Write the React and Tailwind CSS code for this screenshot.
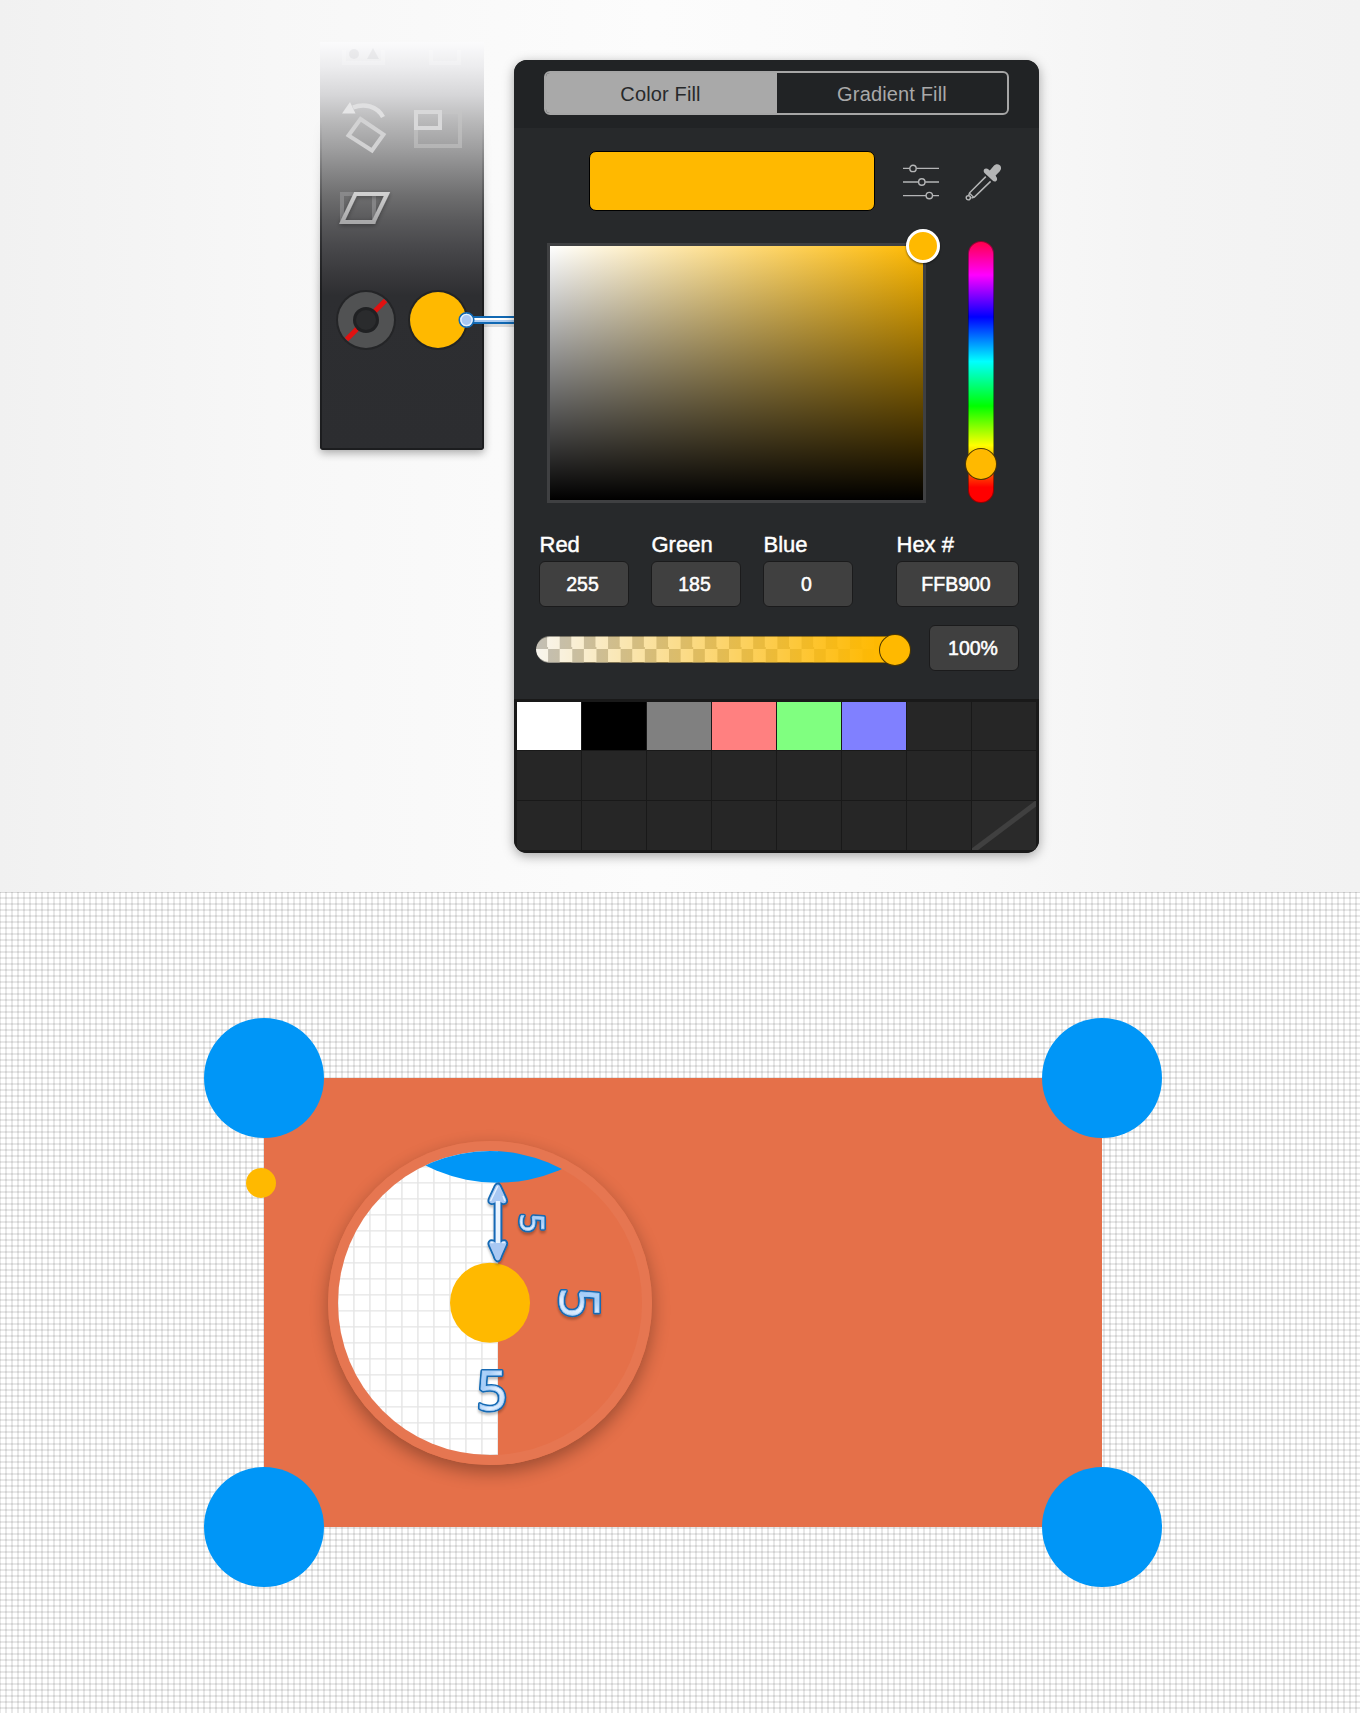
import React from "react";

const SWATCHES = ["#ffffff", "#000000", "#808080", "#ff8080", "#80ff80", "#8080ff"];

function Field({ label, value, className }) {
  return (
    <div className={className}>
      <div className="mb-[4px] ml-[1px] mt-[1px] h-6 text-[22px] leading-6 text-white [-webkit-text-stroke:0.45px_white]">{label}</div>
      <ValueBox value={value} />
    </div>
  );
}

function ValueBox({ value }) {
  return (
    <div className="flex h-[46px] items-center justify-center rounded-[6px] border border-[#1b1b1c] bg-[#404040] pr-[2px] pt-[1px] text-[19.5px] leading-none text-white [-webkit-text-stroke:0.5px_white]">
      {value}
    </div>
  );
}

function SlidersIcon() {
  return (
    <svg width="38" height="36" viewBox="0 0 38 36" fill="none" stroke="#b4b5b6" strokeWidth="1.4">
      <path d="M1 4.4H7.7M14.3 4.4H37M1 18H16.5M23.1 18H37M1 31.6H24M30.6 31.6H37" />
      <circle cx="11" cy="4.4" r="3.2" />
      <circle cx="19.8" cy="18" r="3.2" />
      <circle cx="27.3" cy="31.6" r="3.2" />
    </svg>
  );
}

function DropperIcon() {
  return (
    <svg width="37" height="38" viewBox="0 0 37 38" fill="none">
      <path d="M20.8 12.6L4.6 28.8L3.600 31.8M25.600 17.400L9.400 33L6.400 34" stroke="#b4b5b6" strokeWidth="1.500" />
      <circle cx="3.300" cy="33.800" r="2.100" stroke="#b4b5b6" strokeWidth="1.400" />
      <path d="M4.800 29.500L8.800 33.500" stroke="#b4b5b6" strokeWidth="1.200" />
      <path d="M19 5.600C20 4 22.400 4.200 23.600 5.600L24.800 6.400L28.600 2C30.200 0 33 -.4 34.800 1.200C36.600 2.800 36.400 5.600 34.600 7.400L30.600 11.400L31.200 12.800C32.600 14.200 32.400 16.600 30.600 17.400C29.400 17.800 28.400 17.200 27.600 16.400L19.800 9.200C18.600 8 18.400 6.800 19 5.600Z" fill="#b4b5b6" />
    </svg>
  );
}

function ToolIcons() {
  return (
    <svg className="relative block" width="164" height="408" viewBox="320 42 164 408" fill="none">
      <defs>
        <linearGradient id="skew" x1="0" y1="0" x2="0" y2="1">
          <stop offset="0" stopColor="#d0d0d0" />
          <stop offset="1" stopColor="#a8a8a9" />
        </linearGradient>
        <filter id="soft" x="-30%" y="-30%" width="160%" height="160%">
          <feDropShadow dx="0" dy="1.5" stdDeviation="2" floodOpacity=".35" />
        </filter>
      </defs>
      <g opacity=".22">
        <path d="M344 50V63H383V50M431 50V63H459V50" stroke="#fff" strokeWidth="4" />
        <circle cx="354" cy="54" r="5" fill="#c4c5c8" />
        <path d="M367 59L373 48L379 59Z" fill="#c4c5c8" />
      </g>
      <path d="M353 107.500C364 103 377 106 383 117" stroke="#e0e0e1" strokeWidth="4.500" />
      <path d="M342 113.500L350 102L355.500 113.500Z" fill="#e6e6e7" />
      <path d="M360.500 119L383.500 134.500L372 150.500L348.500 135.500Z" stroke="#d2d2d3" strokeWidth="4" />
      <rect x="416" y="112" width="44" height="34" stroke="#c6c6c7" strokeOpacity=".55" strokeWidth="4" />
      <rect x="416" y="112" width="24" height="16" stroke="#d8d8d9" strokeWidth="4" />
      <path d="M342 194H374V222H342Z" stroke="#9a9a9b" strokeOpacity=".6" strokeWidth="4" />
      <path d="M355.500 194H387L373.500 222H342.200Z" stroke="url(#skew)" strokeWidth="4" filter="url(#soft)" />
      <circle cx="366" cy="320" r="30" fill="#242527" />
      <circle cx="366" cy="320" r="28" fill="#515253" />
      <path d="M346.500 339.500L385.500 300.500" stroke="#e01111" strokeWidth="5" />
      <circle cx="366" cy="320" r="13" fill="#202123" />
      <circle cx="366" cy="320" r="10" fill="#2a2b2d" />
      <circle cx="438" cy="320" r="30" fill="#232425" />
      <circle cx="438" cy="320" r="28" fill="#ffb900" />
    </svg>
  );
}

function ToolPalette() {
  return (
    <div className="relative mt-[42px] h-[408px] w-[164px] shrink-0">
      <div className="absolute -inset-[24px] p-[24px] [mask-image:linear-gradient(transparent_100px,black_270px)]">
        <div className="size-full rounded-b-[3px] shadow-[0_3px_9px_rgba(0,0,0,0.32)]" />
      </div>
      <div className="relative h-full overflow-hidden rounded-b-[3px] bg-[linear-gradient(#fbfbfc_0px,#ececee_25px,#d6d6d8_53px,#b8b8b9_80px,#9f9fa0_106px,#848485_132px,#6e6e6f_154px,#5a5a5c_178px,#48484b_205px,#3a3a3d_230px,#2d2e31_254px,#2c2d30_408px)]">
        <div className="absolute inset-0 rounded-b-[3px] border-2 border-t-0 border-[#1c1d1f] [mask-image:linear-gradient(transparent_80px,rgba(0,0,0,0.25)_150px,black_260px)]" />
        <ToolIcons />
      </div>
    </div>
  );
}

function Connector() {
  return (
    <svg className="absolute left-[456px] top-[308px]" width="62" height="26" viewBox="456 308 62 26">
      <rect x="484" y="324" width="30" height="3" fill="#000" opacity=".12" />
      <rect x="470" y="316" width="48" height="8" fill="#1269b3" />
      <rect x="470" y="318" width="48" height="4" fill="#a9cbf2" />
      <rect x="470" y="318" width="48" height="2" fill="#fff" />
      <circle cx="466.500" cy="320" r="7.200" fill="#a9c8f3" stroke="#1269b3" strokeWidth="1.700" />
      <circle cx="466.500" cy="320" r="5.600" fill="#a9c8f3" stroke="#e4f1ff" strokeWidth="1.400" />
    </svg>
  );
}

function ColorPanel() {
  return (
    <div className="relative mt-[60px] ml-[30px] h-[793px] w-[525px] shrink-0 rounded-[13px] shadow-[0_3px_12px_rgba(0,0,0,0.35)]">
      <div className="flex h-full flex-col overflow-hidden rounded-[13px] bg-[#27292b]">
        <div className="h-[68px] bg-[#212325] px-[30px] pt-[11px]">
          <div className="flex h-[44px] w-[465px] overflow-hidden rounded-[6px] border-2 border-[#a6a6a6] text-[20px] tracking-[0.15px]">
            <div className="flex w-[231px] items-center justify-center bg-[#a9a9a9] pt-[1px] pr-[2px] text-[#27292b]">Color Fill</div>
            <div className="flex flex-1 items-center justify-center pt-[1px] text-[#a9a9a9]">Gradient Fill</div>
          </div>
        </div>

        <div className="mt-[23px] ml-[75px] flex h-[60px] items-start">
          <div className="h-[60px] w-[286px] rounded-[7px] border border-black bg-[#ffb900]" />
          <div className="mt-[13px] ml-[27px]"><SlidersIcon /></div>
          <div className="mt-[13px] ml-[25px]"><DropperIcon /></div>
        </div>

        <div className="mt-[30px] ml-[33px] flex h-[262px] items-start">
          <div className="relative mt-[2px] h-[260px] w-[378.5px] border-[3px] border-[#3f4042] bg-[linear-gradient(to_top,#000,transparent),linear-gradient(to_right,#fff,#ffb900)] bg-origin-padding">
            <div className="absolute -right-[17px] -top-[17px] size-[34px] rounded-full border-[3px] border-white bg-[#ffb900] shadow-[0_1px_2px_rgba(0,0,0,0.6)]" />
          </div>
          <div className="relative ml-[42.5px] h-[262px] w-[26px] rounded-full border border-black/40 bg-[linear-gradient(#ff0055_1%,#ff00ff_13%,#0000ff_29%,#00ffff_46%,#00ff00_63%,#ffff00_78%,#ff0000_94%)] bg-origin-border">
            <div className="absolute -left-[4px] top-[206px] size-[32px] rounded-full border-[1.5px] border-black/70 bg-[#ffb900]" />
          </div>
        </div>

        <div className="mt-[29px] ml-[24.5px] flex">
          <Field className="w-[90px]" label="Red" value="255" />
          <Field className="ml-[22px] w-[90px]" label="Green" value="185" />
          <Field className="ml-[22px] w-[90px]" label="Blue" value="0" />
          <Field className="ml-[43px] w-[123px]" label="Hex #" value="FFB900" />
        </div>

        <div className="mt-[18px] ml-[22px] flex h-[46px] items-center">
          <div className="relative mt-[2px] h-[27px] w-[374px] rounded-full border-y border-black/40 bg-[linear-gradient(to_right,rgba(255,185,0,0.04)_0%,#ffb900_92%),repeating-conic-gradient(#f8f8f8_0_25%,#c0bfbc_0_50%)] bg-[length:100%_100%,24.2px_26px] bg-[position:0_0,-0.5px_0px] bg-origin-border">
            <div className="absolute -top-[3px] left-[343px] size-[32px] rounded-full border-[1.5px] border-black/70 bg-[#ffb900]" />
          </div>
          <div className="ml-[19px] w-[90px]"><ValueBox value="100%" /></div>
        </div>

        <div className="mt-auto grid h-[154px] grid-cols-[repeat(8,64px)] grid-rows-[48px_49px_49px] gap-px bg-[#191919] p-[3px]">
          {Array.from({ length: 24 }, (_, i) => (
            <div key={i} className="bg-[#262626]" style={SWATCHES[i] ? { backgroundColor: SWATCHES[i] } : undefined}>
              {i === 23 && (
                <svg className="block size-full bg-[#2a2a2a]" viewBox="0 0 64 49">
                  <path d="M0 50.500L65 1.500" stroke="#404040" strokeWidth="5" />
                </svg>
              )}
            </div>
          ))}
        </div>
      </div>
    </div>
  );
}

function Five({ x, y, size, turn = 0 }) {
  return (
    <g filter="url(#fiveShadow)">
      <g transform={`translate(${x} ${y}) rotate(${turn})`} fontFamily='"Open Sans", sans-serif' fontWeight="400" fontSize={size} textAnchor="middle">
        <text y={size * 0.357} fill="#1269b3" stroke="#1269b3" strokeWidth="4" strokeLinejoin="round">5</text>
        <text y={size * 0.357} fill="url(#shine)" stroke="#a9cdf5" strokeWidth=".8">5</text>
      </g>
    </g>
  );
}

function Magnifier() {
  return (
    <div className="absolute left-[328px] top-[249px] size-[324px] rounded-full shadow-[0_7px_18px_rgba(0,0,0,0.32)]">
      <svg className="block" width="324" height="324" viewBox="328 1141 324 324">
        <defs>
          <clipPath id="lens"><circle cx="490" cy="1303" r="152" /></clipPath>
          <pattern id="lensGrid" x="353" y="1182" width="16" height="16" patternUnits="userSpaceOnUse">
            <rect width="16" height="16" fill="#fff" />
            <path d="M.9 0V16M0 .9H16" stroke="#000" strokeOpacity=".1" strokeWidth="1.400" />
          </pattern>
          <linearGradient id="shine" x1="0" y1="0" x2="1" y2="1">
            <stop offset="0" stopColor="#c3e0ff" />
            <stop offset=".35" stopColor="#a5cdf8" />
            <stop offset=".6" stopColor="#e4f1ff" />
            <stop offset="1" stopColor="#a9cdf5" />
          </linearGradient>
          <filter id="fiveShadow" x="-30%" y="-30%" width="160%" height="170%">
            <feDropShadow dx="0" dy="2.500" stdDeviation="1" floodOpacity=".25" />
          </filter>
        </defs>
        <circle cx="490" cy="1303" r="162" fill="#e67651" />
        <g clipPath="url(#lens)">
          <rect x="328" y="1141" width="170" height="324" fill="url(#lensGrid)" />
          <rect x="498" y="1141" width="160" height="324" fill="#e57049" />
          <circle cx="497.500" cy="1022.700" r="160" fill="#0096f7" />
        </g>
        <circle cx="490" cy="1302.700" r="40" fill="#ffb900" />
        <g filter="url(#fiveShadow)">
          <path d="M497.800 1183.500C500 1183.500 501 1185.500 502 1188.500L506.500 1198C508.200 1202 506 1205.500 501.500 1203.500V1241C506 1238.500 508.500 1242.500 506.500 1246L502 1256C501 1259.500 500 1261.500 497.800 1261.500C495.500 1261.500 494.500 1259.500 493.500 1256L489 1246C487.200 1242.500 489.500 1238.500 494.500 1241V1203.500C489.500 1205.500 487.200 1202 489 1198L493.500 1188.500C494.500 1185.500 495.500 1183.500 497.800 1183.500Z" fill="#a9c8f3" stroke="#1269b3" strokeWidth="1.800" />
        </g>
        <path d="M498 1201V1243" stroke="#eaf4ff" strokeWidth="4" />
        <path d="M490.500 1201L497.800 1186M505 1201L503 1196M490.500 1242.500L493.500 1242.500M505 1242.500L502 1242.500" stroke="#e4f1ff" strokeWidth="1.500" fill="none" />
        <Five x={531.5} y={1223} size={33} turn={90} />
        <Five x={579} y={1303} size={54} turn={90} />
        <Five x={492} y={1390.500} size={54} />
      </svg>
    </div>
  );
}

export default function App() {
  return (
    <main className="w-[1360px] overflow-hidden font-['Liberation_Sans',Arial,sans-serif]">
      <section className="relative flex h-[892px] items-start bg-[linear-gradient(to_right,#f1f1f1_0%,#f7f7f7_20%,#fcfcfc_48%,#f9f9f9_70%,#f4f4f4_85%,#f2f2f2_100%)] pl-[320px]">
        <ToolPalette />
        <Connector />
        <ColorPanel />
      </section>

      <section className="relative h-[821px] bg-white bg-[linear-gradient(to_right,transparent_5px,rgba(0,0,0,0.09)_5px),linear-gradient(to_bottom,transparent_5px,rgba(0,0,0,0.09)_5px),linear-gradient(to_right,rgba(0,0,0,0.09)_1px,transparent_1px),linear-gradient(rgba(0,0,0,0.09)_1px,transparent_1px)] bg-[length:6px_6px] shadow-[inset_0_1px_0_rgba(0,0,0,0.06)]">
        <div className="absolute left-[263.6px] top-[186px] h-[449px] w-[838.7px] bg-[#e57049]" />
        <div className="absolute left-[203.6px] top-[125.800px] size-[120px] rounded-full bg-[#0096f7]" />
        <div className="absolute left-[1042.300px] top-[125.800px] size-[120px] rounded-full bg-[#0096f7]" />
        <div className="absolute left-[203.600px] top-[575px] size-[120px] rounded-full bg-[#0096f7]" />
        <div className="absolute left-[1042.300px] top-[575px] size-[120px] rounded-full bg-[#0096f7]" />
        <div className="absolute left-[245.5px] top-[275.5px] size-[30px] rounded-full bg-[#ffb900]" />
        <Magnifier />
      </section>
    </main>
  );
}
